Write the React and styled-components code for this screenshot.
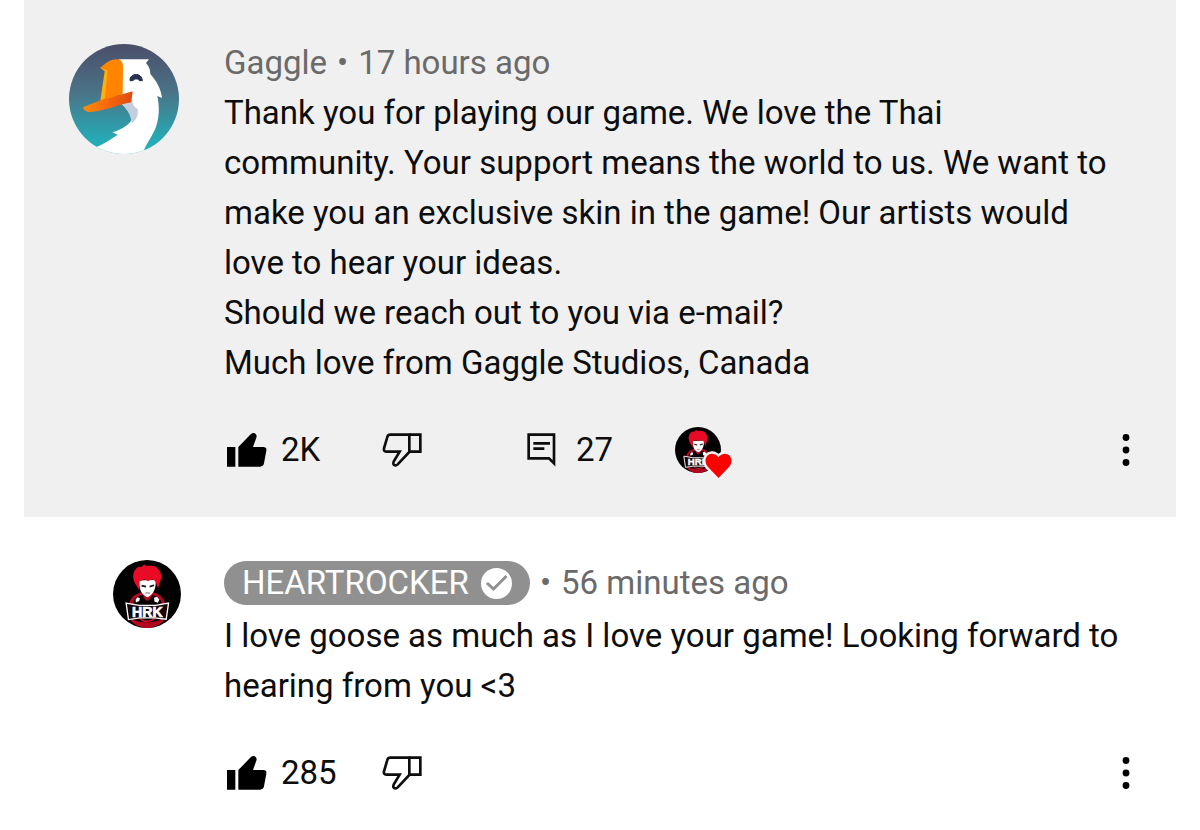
import React from 'react';
import styled, {createGlobalStyle} from 'styled-components';

const GlobalStyle = createGlobalStyle`
  * {
    box-sizing: border-box;
  }
  body {
    margin: 0;
    background: #fff;
    color: #0d0d0d;
    font-family: Roboto, "Liberation Sans", sans-serif;
    font-size: 33px;
    line-height: 50px;
  }
`;

const Thread = styled.main`
  padding: 0 24px;
`;

const CommentBox = styled.article`
  display: grid;
  grid-template-columns: 155px 1fr;
  padding: ${({$reply}) => ($reply ? '41px 30px 24px 45px' : '38px 30px 37px 45px')};
  background: ${({$reply}) => ($reply ? '#fff' : '#f0f0f0')};
`;

const AvatarLink = styled.a`
  display: block;
  justify-self: ${({$reply}) => ($reply ? 'center' : 'start')};
  padding-top: ${({$reply}) => ($reply ? '2px' : '6px')};
  svg {
    display: block;
  }
`;

const Header = styled.header`
  display: flex;
  align-items: center;
  gap: 10px;
  min-height: 50px;
  margin-bottom: ${({$reply}) => ($reply ? '3px' : '0')};
  color: #6a6a6a;
`;

const Author = styled.a`
  color: inherit;
  text-decoration: none;
`;

const AuthorBadge = styled.a`
  display: flex;
  align-items: center;
  gap: 12px;
  height: 44px;
  padding: 0 18px;
  border-radius: 22px;
  background: #909090;
  color: #fff;
  text-decoration: none;
`;

const Body = styled.p`
  margin: 0;
  white-space: pre-line;
`;

const Actions = styled.footer`
  display: grid;
  grid-template-columns: 155px 145px 148px 1fr 40px;
  align-items: center;
  height: 60px;
  margin-top: 32px;
  padding-left: 3px;
`;

const ActionButton = styled.button`
  display: flex;
  align-items: center;
  gap: ${({$wide}) => ($wide ? '20px' : '14px')};
  justify-self: start;
  padding: 0;
  border: 0;
  background: none;
  color: inherit;
  font: inherit;
  cursor: pointer;
`;

const MenuButton = styled(ActionButton)`
  grid-column: 5;
  justify-content: center;
  width: 40px;
`;

const HeartedBy = styled.span`
  position: relative;
  display: block;
  width: 46px;
  height: 46px;
  svg {
    display: block;
  }
`;

const HeartMark = styled.svg`
  position: absolute;
  left: 27px;
  top: 21px;
`;

const GooseAvatar = () => (
    <svg width="110" height="110" viewBox="26 26 330 330" role="img" aria-label="Gaggle">
        <defs>
            <linearGradient id="sky" x1="0" y1="0" x2="0" y2="1">
                <stop offset="0" stopColor="#4b4e69"/>
                <stop offset="0.45" stopColor="#4a7488"/>
                <stop offset="0.85" stopColor="#27a8b3"/>
                <stop offset="1" stopColor="#22b4bb"/>
            </linearGradient>
            <linearGradient id="bill" x1="0" y1="0" x2="1" y2="0">
                <stop offset="0" stopColor="#ff8a0a"/>
                <stop offset="0.5" stopColor="#f5680c"/>
                <stop offset="1" stopColor="#e04a10"/>
            </linearGradient>
            <clipPath id="round">
                <circle cx="191" cy="191" r="165"/>
            </clipPath>
        </defs>
        <g clipPath="url(#round)">
            <rect x="26" y="26" width="330" height="330" fill="url(#sky)"/>
            <path d="M176 72H266L257 83C268 95 270 107 270 116C289 138 302 160 305 188L291 182C297 210 297 240 290 264C284 292 262 318 250 346L240 360H90L106 336C137 322 159 307 172 298L156 291C186 281 207 269 218 247L182 200Z" fill="#fff"/>
            <path d="M183 206L216 194C215 208 224 218 232 220C234 236 232 251 214 264C212 237 199 220 183 206Z" fill="#c5cedd"/>
            <path d="M119 97C137 86 143 72 172 72C184 73 189 83 188 101L187 176L137 194L121 195L136 105Z" fill="#ff8500"/>
            <path d="M119 97L142 105L134 188L120 196L133 108Z" fill="#ffae0c"/>
            <path d="M69 215L121 195L150 187L217 168L213 201C165 211 125 229 89 230C77 230 66 222 69 215Z" fill="url(#bill)"/>
            <path d="M209 136C207 113 245 110 246 136H237C236 129 220 129 218 136Z" fill="#28314f" stroke="#28314f" strokeWidth="3"/>
        </g>
    </svg>
);

const RockerAvatar = ({size}) => (
    <svg width={size} height={size} viewBox="23 31 202 202" role="img" aria-label="HEARTROCKER">
        <circle cx="124" cy="132" r="101" fill="#020202"/>
        <path d="M69 172C72 143 87 132 108 127H143C166 134 178 148 180 174L172 214C142 240 103 239 77 214Z" fill="#b30820"/>
        <path d="M82 157C88 142 99 137 111 135L120 151H130L139 135C154 139 164 146 168 158L156 167H93Z" fill="#090305"/>
        <path d="M101 92L149 90C153 113 143 134 126 142C109 136 99 118 101 92Z" fill="#fff"/>
        <path d="M108 107L121 110M132 110L145 106" stroke="#1a1013" strokeWidth="5"/>
        <path d="M119 129H133" stroke="#8b6c70" strokeWidth="3"/>
        <path d="M92 106C78 87 80 62 99 51L107 52L116 44L122 49L138 47C162 51 173 79 163 94L157 116L149 94L139 88L127 94L116 88L102 94L101 121Z" fill="#e90b25"/>
        <path d="M90 148L96 142L103 144L101 153L91 157ZM145 143L154 140L161 148L156 158L146 154Z" fill="#fff"/>
        <path d="M84 200V208C98 219 150 219 164 208V200Z" fill="#08070a"/>
        <path d="M104 204C108 216 140 216 146 204" fill="none" stroke="#cf1026" strokeWidth="5"/>
        <path d="M62 159L101 166H149L188 159L181 207L146 203H103L69 208Z" fill="#150407" stroke="#fff" strokeWidth="4"/>
        <text x="125" y="199" textAnchor="middle" fill="#fff" fontFamily="Liberation Sans, sans-serif" fontSize="42" fontWeight="700" stroke="#fff" strokeWidth="2">HRK</text>
    </svg>
);

const LikeIcon = () => (
    <svg width="40" height="34" viewBox="0 0 120 102" aria-hidden="true">
        <path d="M0 42H25V101H0ZM34 42L71 4C80 -4 92 2 88 14L78 42H109Q120 42 118 53L111 91Q109 101 99 101H34Z"/>
    </svg>
);

const DislikeIcon = () => (
    <svg width="40" height="34" viewBox="0 0 120 102" fill="none" stroke="currentColor" strokeWidth="8" aria-hidden="true">
        <path d="M82 5H25Q18 5 16 12L6 46Q4 56 13 56H53L35 86Q31 97 41 97Q44 97 47 94L82 57Z"/>
        <path d="M82 5H115V56H82"/>
    </svg>
);

const RepliesIcon = () => (
    <svg width="29" height="34" viewBox="0 0 87 102" fill="none" stroke="currentColor" strokeWidth="8" aria-hidden="true">
        <path d="M5 5H81V91L66 76H5Z"/>
        <path d="M19 31H69M19 47H52"/>
    </svg>
);

const VerifiedIcon = () => (
    <svg width="31" height="31" viewBox="0 0 31 31" aria-label="Verified" role="img">
        <circle cx="15.5" cy="15.5" r="15.5" fill="#fff"/>
        <path d="M6 15L12.500 21L25.500 8" fill="none" stroke="#909090" strokeWidth="3"/>
    </svg>
);

const DotsIcon = () => (
    <svg width="8" height="32" viewBox="0 0 8 32" aria-hidden="true">
        <circle cx="4" cy="3.500" r="3.400"/>
        <circle cx="4" cy="16" r="3.400"/>
        <circle cx="4" cy="28.500" r="3.400"/>
    </svg>
);

const Comment = ({reply, avatar, author, time, text, likes, replies}) => (
    <CommentBox $reply={reply}>
        <AvatarLink href="#" $reply={reply}>{avatar}</AvatarLink>
        <div>
            <Header $reply={reply}>
                {author}
                <span>•</span>
                <span>{time}</span>
            </Header>
            <Body>{text}</Body>
            <Actions>
                <ActionButton type="button"><LikeIcon/>{likes}</ActionButton>
                <ActionButton type="button" aria-label="Dislike"><DislikeIcon/></ActionButton>
                {replies && (
                    <>
                        <ActionButton type="button" $wide><RepliesIcon/>{replies}</ActionButton>
                        <HeartedBy>
                            <RockerAvatar size={46}/>
                            <HeartMark width="34" height="36" viewBox="0 0 34 36" aria-hidden="true">
                                <path
                                    d="M16.500 30L6 19C-1 11 8 0 16.500 9C25 0 34 11 27 19Z"
                                    fill="#f00"
                                    stroke="#f4f4f4"
                                    strokeWidth="5"
                                    paintOrder="stroke"
                                />
                            </HeartMark>
                        </HeartedBy>
                    </>
                )}
                <MenuButton type="button" aria-label="More actions"><DotsIcon/></MenuButton>
            </Actions>
        </div>
    </CommentBox>
);

const pinnedText = `Thank you for playing our game. We love the Thai
community. Your support means the world to us. We want to
make you an exclusive skin in the game! Our artists would
love to hear your ideas.
Should we reach out to you via e-mail?
Much love from Gaggle Studios, Canada`;

const replyText = `I love goose as much as I love your game! Looking forward to
hearing from you <3`;

export default function App() {
    return (
        <Thread>
            <GlobalStyle/>
            <Comment
                avatar={<GooseAvatar/>}
                author={<Author href="#">Gaggle</Author>}
                time="17 hours ago"
                text={pinnedText}
                likes="2K"
                replies="27"
            />
            <Comment
                reply
                avatar={<RockerAvatar size={68}/>}
                author={<AuthorBadge href="#">HEARTROCKER<VerifiedIcon/></AuthorBadge>}
                time="56 minutes ago"
                text={replyText}
                likes="285"
            />
        </Thread>
    );
}
